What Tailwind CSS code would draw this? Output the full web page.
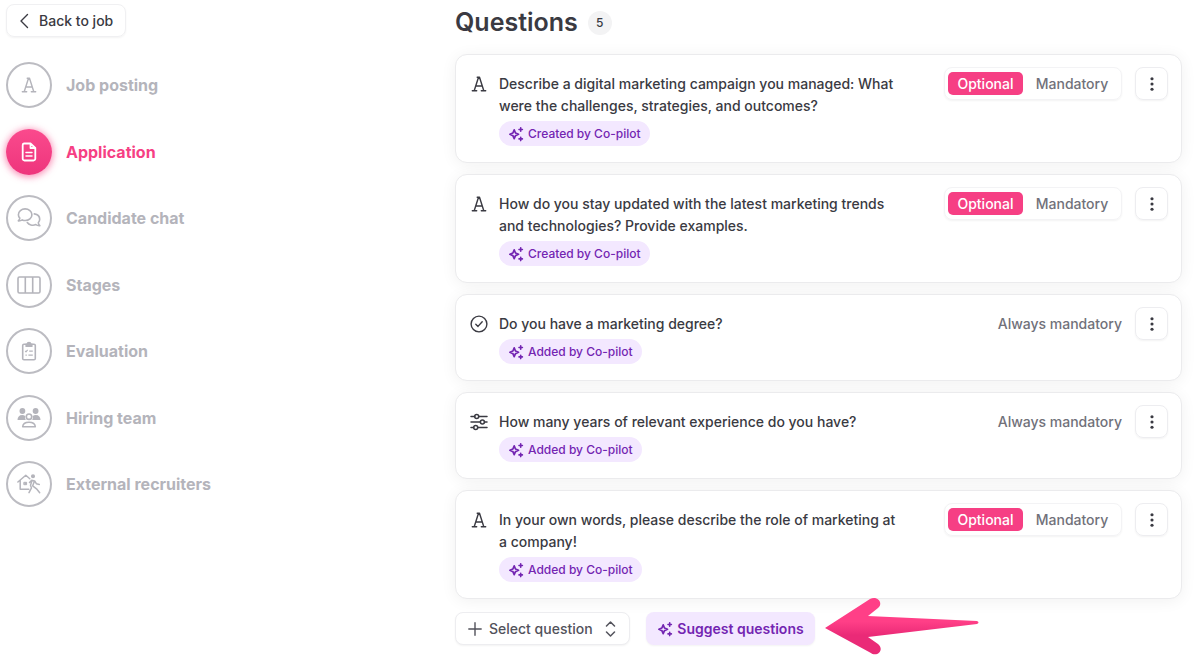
<!DOCTYPE html>
<html lang="en">
<head>
<meta charset="utf-8">
<meta name="viewport" content="width=device-width, initial-scale=1">
<title>Application questions</title>
<script src="https://cdn.jsdelivr.net/npm/@tailwindcss/browser@4"></script>
</head>
<body class="min-h-screen bg-white font-['Inter',sans-serif] text-[#3a3a42]">
<svg class="hidden" aria-hidden="true">
  <symbol id="letter" viewBox="0 0 18 18"><path d="M4.200 15.700 8.500 2.300h1l4.300 13.400M5.800 11h6.400M2.300 15.700h4.400M11.300 15.700h4.400M7.200 2.300h2.300" fill="none" stroke="currentColor" stroke-width="1.400" stroke-linejoin="round" stroke-linecap="round"/></symbol>
  <symbol id="sparkles" viewBox="0 0 16 16"><path d="M6.200 3.900 7.500 7 10.500 8.300 7.500 9.600 6.200 12.700 4.900 9.600 1.900 8.300 4.900 7Z" fill="none" stroke="currentColor" stroke-width="1.700" stroke-linejoin="round"/><path d="M12.700 1.800v3.400M11 3.500h3.400M12.700 11.200v3.400M11 12.900h3.400" fill="none" stroke="currentColor" stroke-width="1.600" stroke-linecap="round"/></symbol>
  <symbol id="dots" viewBox="0 0 16 16"><g fill="currentColor"><circle cx="8" cy="2" r="1.8"/><circle cx="8" cy="8" r="1.8"/><circle cx="8" cy="14" r="1.8"/></g></symbol>
</svg>
<div class="flex items-start">
  <aside class="w-[455px] shrink-0 pl-[6px] pt-1">
    <button type="button" class="flex h-[33px] w-[120px] items-center gap-[10px] rounded-lg border border-[#f0f0f2] pl-3 text-sm font-medium shadow-xs">
      <svg class="h-4 w-[10px]" viewBox="0 0 10 16" fill="none" stroke="currentColor" stroke-width="1.4" stroke-linecap="round" stroke-linejoin="round"><path d="M8.5 1.5 2 8l6.500 6.500"/></svg>
      Back to job
    </button>
    <nav aria-label="Job setup" class="mt-[25px]">
      <ul class="flex h-[445px] flex-col justify-between text-base font-bold text-[#b4b4bb]">
        <li><a href="#posting" class="flex items-center gap-[14px]"><span class="flex size-[46px] items-center justify-center rounded-full border-2 border-[#bcbcc2]"><svg class="size-[18px]"><use href="#letter"/></svg></span>Job posting</a></li>
        <li><a href="#application" aria-current="page" class="flex items-center gap-[14px] text-[#f63f84]"><span class="flex size-[46px] items-center justify-center rounded-full bg-linear-to-b from-[#fa4a8d] to-[#ee347c] text-white shadow-[0_1px_7px_1px_#f63f8499]"><svg class="size-5" viewBox="0 0 20 20" fill="none" stroke="currentColor" stroke-width="1.8" stroke-linejoin="round" stroke-linecap="round"><path d="M5 1.500h6.500L16.300 6v10.700a1.800 1.800 0 0 1-1.800 1.800h-9a1.800 1.800 0 0 1-1.800-1.800V3A1.500 1.500 0 0 1 5 1.500ZM11.500 1.500V6h4.800"/><path d="M7 10.600h6M7 14h6" stroke-width="1.500"/></svg></span>Application</a></li>
        <li><a href="#chat" class="flex items-center gap-[14px]"><span class="flex size-[46px] items-center justify-center rounded-full border-2 border-[#bcbcc2]"><svg class="size-6" viewBox="0 0 24 24" fill="none" stroke="currentColor" stroke-width="1.600" stroke-linejoin="round" stroke-linecap="round"><path d="M14.900 8.700c0 3.300-3 5.800-6.700 5.800-1 0-2-.2-2.900-.6-1 .7-2.300 1.100-4 1 .9-.8 1.400-1.700 1.500-2.800-.9-.9-1.400-2.100-1.400-3.400 0-3.300 3-5.800 6.700-5.800s6.800 2.500 6.800 5.800Z"/><path d="M17.300 7.900c3 .5 5.400 2.600 5.400 5.400 0 1.300-.5 2.500-1.400 3.400.1 1.100.6 2 1.500 2.900-1.700.1-3-.3-4-1-3.300 1.400-7 .2-8.500-2.100"/></svg></span>Candidate chat</a></li>
        <li><a href="#stages" class="flex items-center gap-[14px]"><span class="flex size-[46px] items-center justify-center rounded-full border-2 border-[#bcbcc2]"><svg class="size-6" viewBox="0 0 24 24" fill="none" stroke="currentColor" stroke-width="1.600"><rect x="1" y="4" width="22" height="16" rx="1.500"/><path d="M8.300 4v16M15.700 4v16"/></svg></span>Stages</a></li>
        <li><a href="#evaluation" class="flex items-center gap-[14px]"><span class="flex size-[46px] items-center justify-center rounded-full border-2 border-[#bcbcc2]"><svg class="size-5" viewBox="0 0 20 20" fill="none" stroke="currentColor" stroke-width="1.600" stroke-linejoin="round"><rect x="3.700" y="3.200" width="12.600" height="15.600" rx="1.300"/><path d="M7 3.200h1.200a1.800 1.800 0 0 1 3.600 0H13v2.300H7Z" fill="#b4b4bb" stroke-width="1.200"/><path d="m6.200 10 .8.800 1.600-1.900M10.200 10.200h3.600M6.500 14.200h1.300M9.400 14.200h4.400" stroke-width="1.200"/></svg></span>Evaluation</a></li>
        <li><a href="#team" class="flex items-center gap-[14px]"><span class="flex size-[46px] items-center justify-center rounded-full border-2 border-[#bcbcc2]"><svg class="size-6" viewBox="0 0 24 24" fill="currentColor"><circle cx="5.400" cy="5" r="2.900"/><circle cx="18.600" cy="5" r="2.900"/><path d="M.5 14c0-3 1.700-5 4.700-5 1.300 0 2.400.4 3.200 1.200-.5 1.400-.3 2.700.5 3.800ZM23.500 14c0-3-1.700-5-4.700-5-1.300 0-2.400.4-3.200 1.200.5 1.400.3 2.700-.5 3.800Z"/><g fill="none" stroke="currentColor" stroke-width="1.600"><circle cx="12" cy="10.700" r="2.700"/><path d="M5.700 20.700c.2-2.800 2.300-4.500 6.300-4.500s6.100 1.700 6.300 4.500Z" stroke-linejoin="round"/></g></svg></span>Hiring team</a></li>
        <li><a href="#recruiters" class="flex items-center gap-[14px]"><span class="flex size-[46px] items-center justify-center rounded-full border-2 border-[#bcbcc2]"><svg class="size-6" viewBox="0 0 24 24" fill="none" stroke="currentColor" stroke-width="1.500" stroke-linecap="round" stroke-linejoin="round"><path d="M.9 10 8.800 3.300l4 3.400M3.200 8.500v8.700h8.600"/><rect x="7.200" y="10.300" width="2.400" height="2.400" fill="currentColor" stroke-width="1"/><circle cx="16" cy="4.300" r="1.300" fill="currentColor"/><path d="m12.500 10.500 2.200-2.300 3 .7 1.600 2.800 3 .7M17.500 9l-1.800 4.800 3.800 3 3.200 3.900M15 8.500l-1.500 4.700 1 2.700-2.500 4.800"/></svg></span>External recruiters</a></li>
      </ul>
    </nav>
  </aside>
  <main class="min-w-0 flex-1 pr-[18px] pt-[6px]">
    <div class="flex h-[34px] items-center gap-[10px]">
      <h1 class="text-[25px] font-semibold">Questions</h1>
      <span class="flex size-6 items-center justify-center rounded-full bg-[#f3f3f4] text-xs font-medium">5</span>
    </div>
    <ul class="mt-[14px] flex flex-col gap-[11px]">
      <li class="flex items-start rounded-xl border border-[#ebebed] bg-white pb-4 pl-[14px] pr-[13px] shadow-[0_2px_16px_#0000000f]">
        <svg class="mr-[11px] mt-5 size-[18px] shrink-0"><use href="#letter"/></svg>
        <div class="min-w-0 flex-1 pr-11 pt-[18px]">
          <p class="text-sm leading-[22px] font-medium">Describe a digital marketing campaign you managed: What were the challenges, strategies, and outcomes?</p>
          <span class="mt-1 inline-flex h-[25px] items-center gap-1 rounded-full bg-[#f3e8ff] px-[9px] text-xs font-medium text-[#7325b2] align-top"><svg class="size-4"><use href="#sparkles"/></svg>Created by Co-pilot</span>
        </div>
        <fieldset class="mt-3 flex h-[33px] w-[178px] shrink-0 items-center rounded-lg border border-[#f3f3f5] pl-[3px] text-sm font-medium text-[#71717a] shadow-xs">
          <label class="flex h-[23px] w-[75px] items-center justify-center rounded-[5px] has-checked:bg-[#f63f84] has-checked:text-white"><input type="radio" name="q1" checked class="sr-only">Optional</label>
          <label class="flex h-[23px] flex-1 items-center justify-center rounded-[5px]"><input type="radio" name="q1" class="sr-only">Mandatory</label>
        </fieldset>
        <button type="button" aria-label="Question options" class="ml-[13px] mt-3 flex size-[33px] shrink-0 items-center justify-center rounded-lg border border-[#ededf0] shadow-xs"><svg class="size-[14px]"><use href="#dots"/></svg></button>
      </li>
      <li class="flex items-start rounded-xl border border-[#ebebed] bg-white pb-4 pl-[14px] pr-[13px] shadow-[0_2px_16px_#0000000f]">
        <svg class="mr-[11px] mt-5 size-[18px] shrink-0"><use href="#letter"/></svg>
        <div class="min-w-0 flex-1 pr-11 pt-[18px]">
          <p class="text-sm leading-[22px] font-medium">How do you stay updated with the latest marketing trends and technologies? Provide examples.</p>
          <span class="mt-1 inline-flex h-[25px] items-center gap-1 rounded-full bg-[#f3e8ff] px-[9px] text-xs font-medium text-[#7325b2] align-top"><svg class="size-4"><use href="#sparkles"/></svg>Created by Co-pilot</span>
        </div>
        <fieldset class="mt-3 flex h-[33px] w-[178px] shrink-0 items-center rounded-lg border border-[#f3f3f5] pl-[3px] text-sm font-medium text-[#71717a] shadow-xs">
          <label class="flex h-[23px] w-[75px] items-center justify-center rounded-[5px] has-checked:bg-[#f63f84] has-checked:text-white"><input type="radio" name="q2" checked class="sr-only">Optional</label>
          <label class="flex h-[23px] flex-1 items-center justify-center rounded-[5px]"><input type="radio" name="q2" class="sr-only">Mandatory</label>
        </fieldset>
        <button type="button" aria-label="Question options" class="ml-[13px] mt-3 flex size-[33px] shrink-0 items-center justify-center rounded-lg border border-[#ededf0] shadow-xs"><svg class="size-[14px]"><use href="#dots"/></svg></button>
      </li>
      <li class="flex items-start rounded-xl border border-[#ebebed] bg-white pb-4 pl-[14px] pr-[13px] shadow-[0_2px_16px_#0000000f]">
        <svg class="mr-[11px] mt-5 size-[18px] shrink-0" viewBox="0 0 18 18" fill="none" stroke="currentColor" stroke-width="1.400" stroke-linecap="round" stroke-linejoin="round"><circle cx="9" cy="9" r="7.900"/><path d="m5.800 9.300 2.200 2.100 4.200-4.600"/></svg>
        <div class="min-w-0 flex-1 pr-11 pt-[18px]">
          <p class="text-sm leading-[22px] font-medium">Do you have a marketing degree?</p>
          <span class="mt-1 inline-flex h-[25px] items-center gap-1 rounded-full bg-[#f3e8ff] px-[9px] text-xs font-medium text-[#7325b2] align-top"><svg class="size-4"><use href="#sparkles"/></svg>Added by Co-pilot</span>
        </div>
        <p class="mt-[18px] shrink-0 text-sm leading-[22px] font-medium text-[#71717a]">Always mandatory</p>
        <button type="button" aria-label="Question options" class="ml-[13px] mt-3 flex size-[33px] shrink-0 items-center justify-center rounded-lg border border-[#ededf0] shadow-xs"><svg class="size-[14px]"><use href="#dots"/></svg></button>
      </li>
      <li class="flex items-start rounded-xl border border-[#ebebed] bg-white pb-4 pl-[14px] pr-[13px] shadow-[0_2px_16px_#0000000f]">
        <svg class="mr-[11px] mt-5 size-[18px] shrink-0" viewBox="0 0 18 18" fill="none" stroke="currentColor" stroke-width="1.500" stroke-linecap="round"><path d="M1 3.600h3.700M8.700 3.600H17M1 9h9.400M14.400 9H17M1 14.400h2.700M7.700 14.400H17"/><circle cx="6.700" cy="3.600" r="2"/><circle cx="12.400" cy="9" r="2"/><circle cx="5.700" cy="14.400" r="2"/></svg>
        <div class="min-w-0 flex-1 pr-11 pt-[18px]">
          <p class="text-sm leading-[22px] font-medium">How many years of relevant experience do you have?</p>
          <span class="mt-1 inline-flex h-[25px] items-center gap-1 rounded-full bg-[#f3e8ff] px-[9px] text-xs font-medium text-[#7325b2] align-top"><svg class="size-4"><use href="#sparkles"/></svg>Added by Co-pilot</span>
        </div>
        <p class="mt-[18px] shrink-0 text-sm leading-[22px] font-medium text-[#71717a]">Always mandatory</p>
        <button type="button" aria-label="Question options" class="ml-[13px] mt-3 flex size-[33px] shrink-0 items-center justify-center rounded-lg border border-[#ededf0] shadow-xs"><svg class="size-[14px]"><use href="#dots"/></svg></button>
      </li>
      <li class="flex items-start rounded-xl border border-[#ebebed] bg-white pb-4 pl-[14px] pr-[13px] shadow-[0_2px_16px_#0000000f]">
        <svg class="mr-[11px] mt-5 size-[18px] shrink-0"><use href="#letter"/></svg>
        <div class="min-w-0 flex-1 pr-11 pt-[18px]">
          <p class="text-sm leading-[22px] font-medium">In your own words, please describe the role of marketing at a company!</p>
          <span class="mt-1 inline-flex h-[25px] items-center gap-1 rounded-full bg-[#f3e8ff] px-[9px] text-xs font-medium text-[#7325b2] align-top"><svg class="size-4"><use href="#sparkles"/></svg>Added by Co-pilot</span>
        </div>
        <fieldset class="mt-3 flex h-[33px] w-[178px] shrink-0 items-center rounded-lg border border-[#f3f3f5] pl-[3px] text-sm font-medium text-[#71717a] shadow-xs">
          <label class="flex h-[23px] w-[75px] items-center justify-center rounded-[5px] has-checked:bg-[#f63f84] has-checked:text-white"><input type="radio" name="q5" checked class="sr-only">Optional</label>
          <label class="flex h-[23px] flex-1 items-center justify-center rounded-[5px]"><input type="radio" name="q5" class="sr-only">Mandatory</label>
        </fieldset>
        <button type="button" aria-label="Question options" class="ml-[13px] mt-3 flex size-[33px] shrink-0 items-center justify-center rounded-lg border border-[#ededf0] shadow-xs"><svg class="size-[14px]"><use href="#dots"/></svg></button>
      </li>
    </ul>
    <div class="relative mt-[13px] flex h-[33px] items-center">
      <div class="relative flex h-[33px] w-[175px] items-center rounded-lg border border-[#ededf0] bg-white text-[#52525b] shadow-xs">
        <svg class="pointer-events-none absolute left-3 size-[14px]" viewBox="0 0 14 14" fill="none" stroke="currentColor" stroke-width="1.400" stroke-linecap="round"><path d="M7 .8v12.400M.8 7h12.400"/></svg>
        <select aria-label="Select question" class="h-full w-full appearance-none bg-transparent pl-[33px] text-sm font-medium"><option>Select question</option></select>
        <svg class="pointer-events-none absolute right-[13px] h-4 w-[11px]" viewBox="0 0 11 16" fill="none" stroke="currentColor" stroke-width="1.500" stroke-linecap="round" stroke-linejoin="round"><path d="m1.500 5 4-4 4 4M1.500 11l4 4 4-4"/></svg>
      </div>
      <button type="button" class="ml-4 flex h-[33px] w-[169px] items-center justify-center gap-1 rounded-lg bg-[#f3e8ff] text-sm font-semibold text-[#7325b2] shadow-xs"><svg class="size-4"><use href="#sparkles"/></svg>Suggest questions</button>
      <svg class="absolute -top-4 left-[368px] h-[60px] w-[160px]" viewBox="0 0 160 60" aria-hidden="true">
        <defs><linearGradient id="pink" x1="0" y1="0" x2="0" y2="1"><stop offset=".42" stop-color="#ff3f87"/><stop offset=".66" stop-color="#ea2a77"/></linearGradient></defs>
        <path d="M2 32 47 3C54-1 61 7 55 12L45 20 154 25Q157 26.500 154 28L45 41 55 48C62 54 54 62 47 56.500Z" fill="url(#pink)"/>
      </svg>
    </div>
  </main>
</div>
</body>
</html>
